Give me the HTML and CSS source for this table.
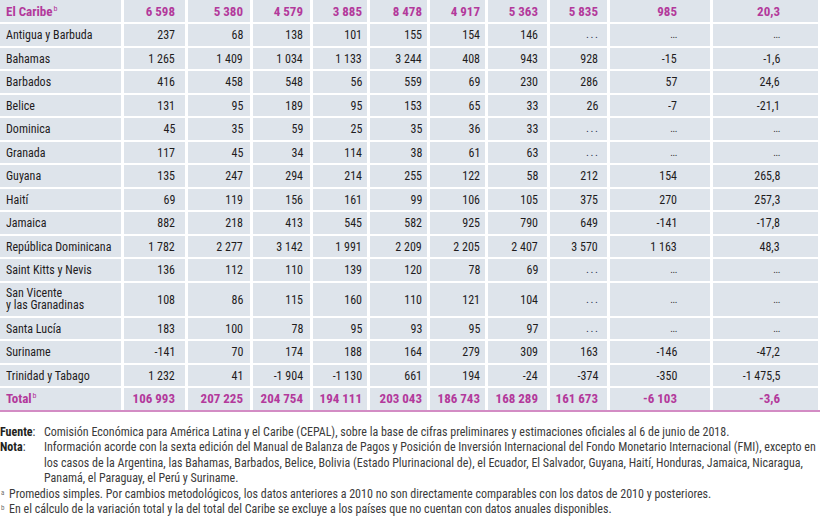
FILE: index.html
```html
<!DOCTYPE html>
<html lang="es">
<head>
<meta charset="utf-8">
<title>El Caribe</title>
<link rel="stylesheet" href="styles.css">
</head>
<body>
<table class="data">
<colgroup>
<col class="w-label"><col class="w1"><col class="w2"><col class="w3"><col class="w4"><col class="w5"><col class="w6"><col class="w7"><col class="w8"><col class="w9"><col class="w10">
</colgroup>
<tbody>
<tr class="region first"><td>El Caribe<sup>b</sup></td><td>6 598</td><td>5 380</td><td>4 579</td><td>3 885</td><td>8 478</td><td>4 917</td><td>5 363</td><td>5 835</td><td>985</td><td>20,3</td></tr>
<tr><td><span class="t">Antigua y Barbuda</span></td><td><span class="t">237</span></td><td><span class="t">68</span></td><td><span class="t">138</span></td><td><span class="t">101</span></td><td><span class="t">155</span></td><td><span class="t">154</span></td><td><span class="t">146</span></td><td><span class="ell">...</span></td><td><span class="dots">...</span></td><td><span class="dots">...</span></td></tr>
<tr><td><span class="t">Bahamas</span></td><td><span class="t">1 265</span></td><td><span class="t">1 409</span></td><td><span class="t">1 034</span></td><td><span class="t">1 133</span></td><td><span class="t">3 244</span></td><td><span class="t">408</span></td><td><span class="t">943</span></td><td><span class="t">928</span></td><td><span class="t">-15</span></td><td><span class="t">-1,6</span></td></tr>
<tr><td><span class="t">Barbados</span></td><td><span class="t">416</span></td><td><span class="t">458</span></td><td><span class="t">548</span></td><td><span class="t">56</span></td><td><span class="t">559</span></td><td><span class="t">69</span></td><td><span class="t">230</span></td><td><span class="t">286</span></td><td><span class="t">57</span></td><td><span class="t">24,6</span></td></tr>
<tr><td><span class="t">Belice</span></td><td><span class="t">131</span></td><td><span class="t">95</span></td><td><span class="t">189</span></td><td><span class="t">95</span></td><td><span class="t">153</span></td><td><span class="t">65</span></td><td><span class="t">33</span></td><td><span class="t">26</span></td><td><span class="t">-7</span></td><td><span class="t">-21,1</span></td></tr>
<tr><td><span class="t">Dominica</span></td><td><span class="t">45</span></td><td><span class="t">35</span></td><td><span class="t">59</span></td><td><span class="t">25</span></td><td><span class="t">35</span></td><td><span class="t">36</span></td><td><span class="t">33</span></td><td><span class="ell">...</span></td><td><span class="dots">...</span></td><td><span class="dots">...</span></td></tr>
<tr><td><span class="t">Granada</span></td><td><span class="t">117</span></td><td><span class="t">45</span></td><td><span class="t">34</span></td><td><span class="t">114</span></td><td><span class="t">38</span></td><td><span class="t">61</span></td><td><span class="t">63</span></td><td><span class="ell">...</span></td><td><span class="dots">...</span></td><td><span class="dots">...</span></td></tr>
<tr><td><span class="t">Guyana</span></td><td><span class="t">135</span></td><td><span class="t">247</span></td><td><span class="t">294</span></td><td><span class="t">214</span></td><td><span class="t">255</span></td><td><span class="t">122</span></td><td><span class="t">58</span></td><td><span class="t">212</span></td><td><span class="t">154</span></td><td><span class="t">265,8</span></td></tr>
<tr><td><span class="t">Haití</span></td><td><span class="t">69</span></td><td><span class="t">119</span></td><td><span class="t">156</span></td><td><span class="t">161</span></td><td><span class="t">99</span></td><td><span class="t">106</span></td><td><span class="t">105</span></td><td><span class="t">375</span></td><td><span class="t">270</span></td><td><span class="t">257,3</span></td></tr>
<tr><td><span class="t">Jamaica</span></td><td><span class="t">882</span></td><td><span class="t">218</span></td><td><span class="t">413</span></td><td><span class="t">545</span></td><td><span class="t">582</span></td><td><span class="t">925</span></td><td><span class="t">790</span></td><td><span class="t">649</span></td><td><span class="t">-141</span></td><td><span class="t">-17,8</span></td></tr>
<tr><td><span class="t">República Dominicana</span></td><td><span class="t">1 782</span></td><td><span class="t">2 277</span></td><td><span class="t">3 142</span></td><td><span class="t">1 991</span></td><td><span class="t">2 209</span></td><td><span class="t">2 205</span></td><td><span class="t">2 407</span></td><td><span class="t">3 570</span></td><td><span class="t">1 163</span></td><td><span class="t">48,3</span></td></tr>
<tr><td><span class="t">Saint Kitts y Nevis</span></td><td><span class="t">136</span></td><td><span class="t">112</span></td><td><span class="t">110</span></td><td><span class="t">139</span></td><td><span class="t">120</span></td><td><span class="t">78</span></td><td><span class="t">69</span></td><td><span class="ell">...</span></td><td><span class="dots">...</span></td><td><span class="dots">...</span></td></tr>
<tr class="tall"><td class="wrap"><span class="t">San Vicente<br>y las Granadinas</span></td><td><span class="t">108</span></td><td><span class="t">86</span></td><td><span class="t">115</span></td><td><span class="t">160</span></td><td><span class="t">110</span></td><td><span class="t">121</span></td><td><span class="t">104</span></td><td><span class="ell">...</span></td><td><span class="dots">...</span></td><td><span class="dots">...</span></td></tr>
<tr><td><span class="t">Santa Lucía</span></td><td><span class="t">183</span></td><td><span class="t">100</span></td><td><span class="t">78</span></td><td><span class="t">95</span></td><td><span class="t">93</span></td><td><span class="t">95</span></td><td><span class="t">97</span></td><td><span class="ell">...</span></td><td><span class="dots">...</span></td><td><span class="dots">...</span></td></tr>
<tr><td><span class="t">Suriname</span></td><td><span class="t">-141</span></td><td><span class="t">70</span></td><td><span class="t">174</span></td><td><span class="t">188</span></td><td><span class="t">164</span></td><td><span class="t">279</span></td><td><span class="t">309</span></td><td><span class="t">163</span></td><td><span class="t">-146</span></td><td><span class="t">-47,2</span></td></tr>
<tr><td><span class="t">Trinidad y Tabago</span></td><td><span class="t">1 232</span></td><td><span class="t">41</span></td><td><span class="t">-1 904</span></td><td><span class="t">-1 130</span></td><td><span class="t">661</span></td><td><span class="t">194</span></td><td><span class="t">-24</span></td><td><span class="t">-374</span></td><td><span class="t">-350</span></td><td><span class="t">-1 475,5</span></td></tr>
<tr class="region"><td>Total<sup>b</sup></td><td>106 993</td><td>207 225</td><td>204 754</td><td>194 111</td><td>203 043</td><td>186 743</td><td>168 289</td><td>161 673</td><td>-6 103</td><td>-3,6</td></tr>
</tbody>
</table>
<div class="rule"></div>
<div class="notes">
  <div class="note-row"><span class="note-label"><b>Fuente</b>:</span><span class="note-text">Comisión Económica para América Latina y el Caribe (CEPAL), sobre la base de cifras preliminares y estimaciones oficiales al 6 de junio de 2018.</span></div>
  <div class="note-row"><span class="note-label"><b>Nota</b>:</span><span class="note-text">Información acorde con la sexta edición del Manual de Balanza de Pagos y Posición de Inversión Internacional del Fondo Monetario Internacional (FMI), excepto en<br>los casos de la Argentina, las Bahamas, Barbados, Belice, Bolivia (Estado Plurinacional de), el Ecuador, El Salvador, Guyana, Haití, Honduras, Jamaica, Nicaragua,<br>Panamá, el Paraguay, el Perú y Suriname.</span></div>
  <div class="foot"><span class="mark">a</span><span>Promedios simples. Por cambios metodológicos, los datos anteriores a 2010 no son directamente comparables con los datos de 2010 y posteriores.</span></div>
  <div class="foot"><span class="mark">b</span><span>En el cálculo de la variación total y la del total del Caribe se excluye a los países que no cuentan con datos anuales disponibles.</span></div>
</div>
</body>
</html>
```
FILE: styles.css
```css
html, body {
  margin: 0;
  padding: 0;
  background: #ffffff;
}
body {
  font-family: "Roboto Condensed", "Open Sans", "DejaVu Sans Condensed", sans-serif;
  font-stretch: 75%;
  color: #231f20;
  width: 820px;
  overflow: hidden;
}
.data {
  table-layout: fixed;
  border-collapse: separate;
  border-spacing: 3px 2px;
  margin: -2px -3px -2px -3px;
  width: 824px;
  font-size: 13px;
}
.w-label { width: 121px; }
.w1 { width: 61px; }
.w2 { width: 62px; }
.w3 { width: 57px; }
.w4 { width: 54px; }
.w5 { width: 57px; }
.w6 { width: 55px; }
.w7 { width: 59px; }
.w8 { width: 57px; }
.w9 { width: 100px; }
.w10 { width: 105px; }

.data td {
  background: #dee4eb;
  height: 21.5px;
  padding: 0;
  line-height: 14px;
  white-space: nowrap;
  vertical-align: middle;
  text-align: right;
  overflow: hidden;
}
.data td:first-child {
  text-align: left;
  padding-left: 6px;
}
.data td:nth-child(2) { padding-right: 10px; }
.data td:nth-child(3) { padding-right: 7px; }
.data td:nth-child(4) { padding-right: 7px; }
.data td:nth-child(5) { padding-right: 5px; }
.data td:nth-child(6) { padding-right: 5px; }
.data td:nth-child(7) { padding-right: 5px; }
.data td:nth-child(8) { padding-right: 9px; }
.data td:nth-child(9) { padding-right: 9px; }
.data td:nth-child(10) { padding-right: 33px; }
.data td:nth-child(11) { padding-right: 38px; }

.t {
  display: inline-block;
  font-size: 13.5px;
  transform: scaleX(0.89);
  transform-origin: right center;
  color: #1f1c1d;
}
.data td:first-child .t {
  transform-origin: left center;
}

.data tr.first td {
  height: 20px;
  padding-top: 2px;
}
.data tr.tall td {
  height: 33px;
}
.data td.wrap .t {
  line-height: 12px;
}
.region td {
  color: #b3399b;
  font-weight: bold;
}
.region sup {
  font-size: 8px;
  font-weight: normal;
  vertical-align: 5px;
  line-height: 0;
  margin-left: 1px;
}
.ell {
  display: inline-block;
  font-size: 11px;
  letter-spacing: 1.6px;
  margin-right: -1.6px;
  color: #2b3550;
}
.dots {
  display: inline-block;
  font-size: 10px;
  letter-spacing: -0.4px;
  color: #333;
}
.rule {
  height: 2px;
  background: #d38cc4;
}
.notes {
  margin-top: 13px;
  font-size: 12px;
  line-height: 15.6px;
  color: #3b3b3b;
}
.note-row {
  display: grid;
  grid-template-columns: 44px 1fr;
}
.note-label b {
  color: #231f20;
}
.foot {
  display: flex;
}
.mark {
  width: 9px;
  flex: none;
  font-size: 7px;
  line-height: 12px;
  color: #6d6d6d;
  padding-left: 1px;
  box-sizing: border-box;
}
```
